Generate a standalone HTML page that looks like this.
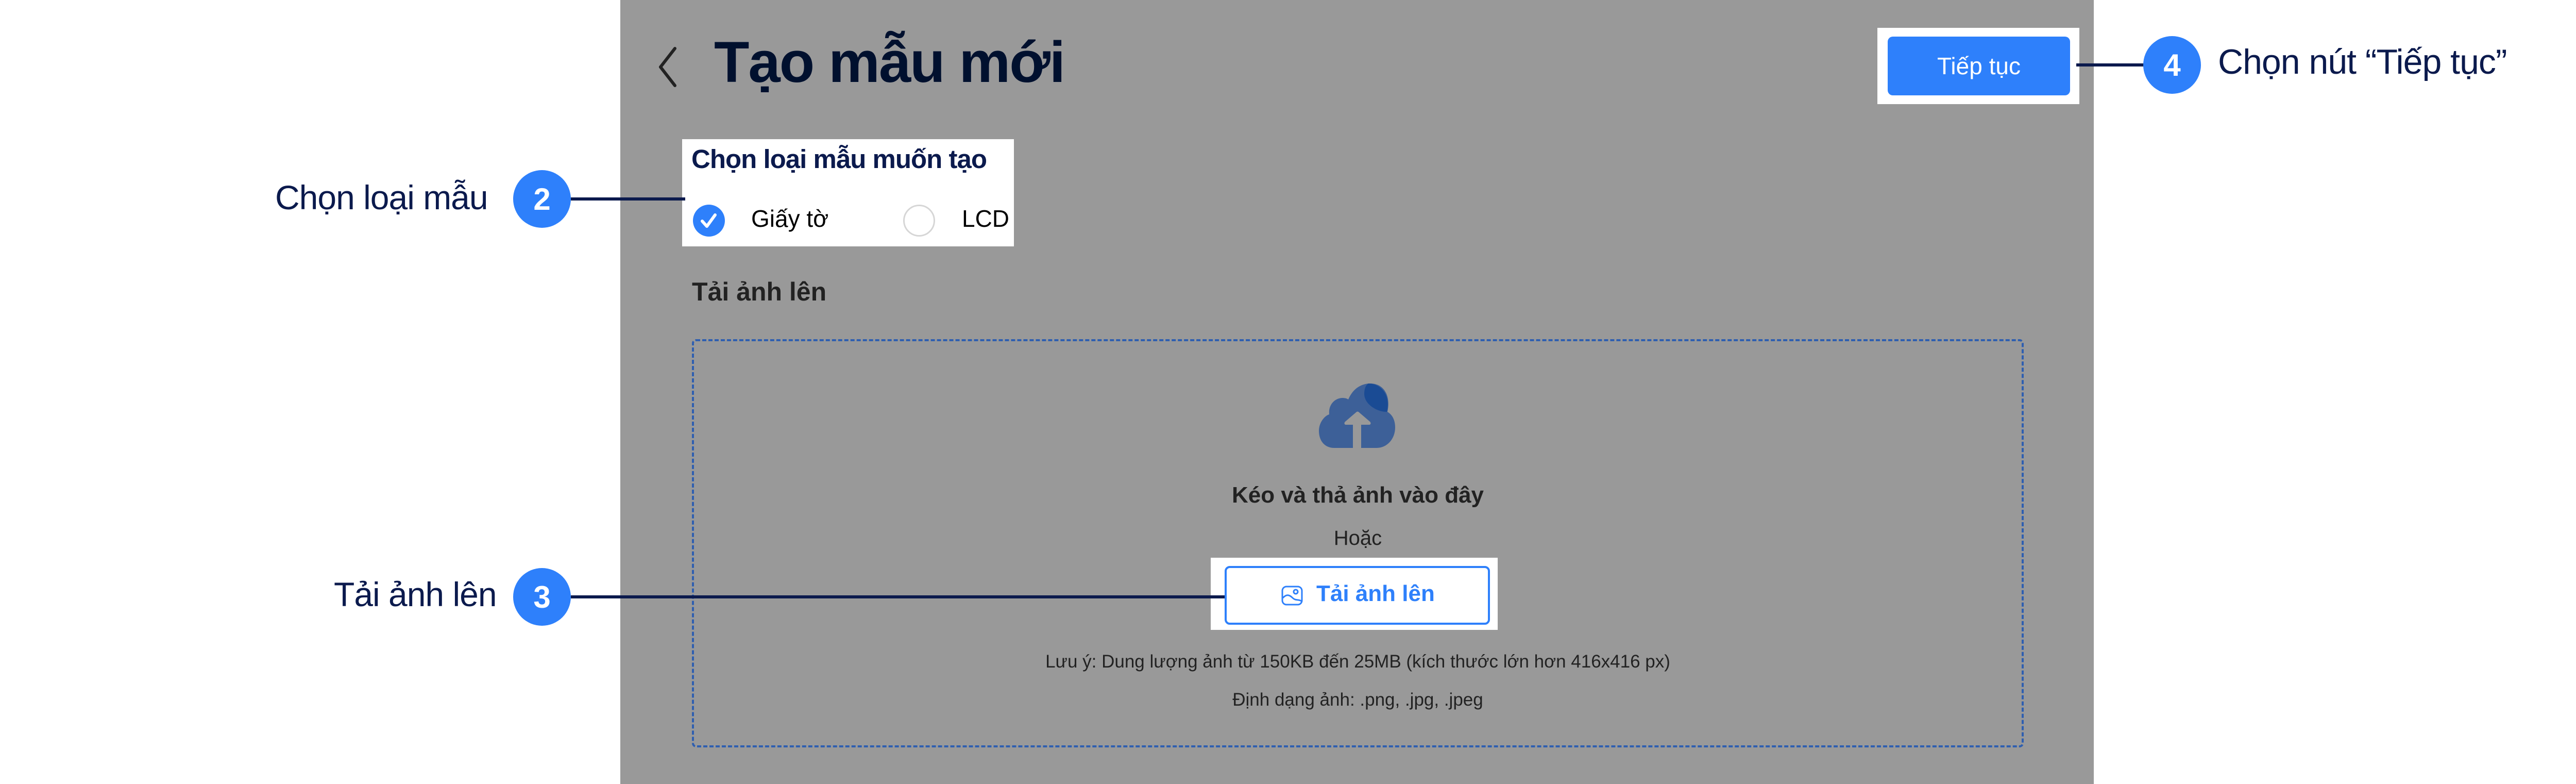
<!DOCTYPE html>
<html><head><meta charset="utf-8"><style>
*{margin:0;padding:0;box-sizing:border-box}
body{width:5264px;height:1521px;background:#fff;position:relative;overflow:hidden;font-family:"Liberation Sans","DejaVu Sans",sans-serif}
.a{position:absolute;line-height:1;white-space:nowrap}
.circ{position:absolute;width:112px;height:112px;border-radius:50%;background:#2e80fb;color:#fff;font-weight:bold;font-size:60px;display:flex;align-items:center;justify-content:center}
.ln{position:absolute;height:6px;background:#0b1a4d}
.lab{position:absolute;color:#0b1a4d;font-size:60px;line-height:1;white-space:nowrap}
</style></head><body>
<div style="position:absolute;left:1204px;top:0;width:2860px;height:1521px;background:#999"></div>

<svg style="position:absolute;left:1270px;top:90px" width="50" height="80" viewBox="0 0 50 80"><path d="M40 4 L12 40 L40 76" fill="none" stroke="#222" stroke-width="6" stroke-linecap="round" stroke-linejoin="round"/></svg>
<div class="a" style="left:1386px;top:65px;font-size:112px;font-weight:bold;color:#00102e;letter-spacing:-2px">Tạo mẫu mới</div>

<div style="position:absolute;left:1324px;top:270px;width:644px;height:208px;background:#fff"></div>
<div class="a" style="left:1342px;top:283px;font-size:51px;font-weight:bold;color:#0b1a4d;letter-spacing:-1px">Chọn loại mẫu muốn tạo</div>
<div style="position:absolute;left:1345px;top:397px;width:62px;height:62px;border-radius:50%;background:#2e80fb"></div>
<svg style="position:absolute;left:1345px;top:397px" width="62" height="62" viewBox="0 0 62 62"><path d="M18 32 L27 42 L43 20" fill="none" stroke="#fff" stroke-width="6" stroke-linecap="round" stroke-linejoin="round"/></svg>
<div class="a" style="left:1458px;top:401px;font-size:46px;color:#000">Giấy tờ</div>
<div style="position:absolute;left:1753px;top:397px;width:62px;height:62px;border-radius:50%;border:3px solid #d6d6d6;background:#fff"></div>
<div class="a" style="left:1867px;top:401px;font-size:46px;color:#000">LCD</div>

<div style="position:absolute;left:3644px;top:54px;width:392px;height:148px;background:#fff"></div>
<div style="position:absolute;left:3664px;top:71px;width:354px;height:114px;background:#2e80fb;border-radius:10px;color:#fff;font-size:46px;display:flex;align-items:center;justify-content:center">Tiếp tục</div>

<div class="a" style="left:1343px;top:541px;font-size:50px;font-weight:bold;color:#222">Tải ảnh lên</div>
<div style="position:absolute;left:1343px;top:658px;width:2585px;height:792px;border:4px dashed #2f5fb0;border-radius:8px"></div>

<svg style="position:absolute;left:2560px;top:744px" width="150" height="125" viewBox="0 0 150 125">
<path d="M30 125 C10 125 0 110 0 92 C0 75 12 62 20 60 C18 40 32 28 46 28 C52 28 56 30 57 31 C66 10 82 0 100 0 C125 0 140 22 133 55 C145 62 148 75 148 85 C148 108 132 125 112 125 Z" fill="#3d6098"/>
<path d="M96 0 C120 0 140 22 132 55 C112 55 88 40 88 20 C88 10 91 3 96 0 Z" fill="#1a4b94"/>
<path d="M66 125 V80 H52 C50 80 48 77 51 74 L72 56 C74 54 76 54 78 56 L99 74 C102 77 100 80 98 80 H82 V125 Z" fill="#999"/>
</svg>
<div class="a" style="left:1343px;width:2585px;text-align:center;top:939px;font-size:44px;font-weight:bold;color:#222">Kéo và thả ảnh vào đây</div>
<div class="a" style="left:1343px;width:2585px;text-align:center;top:1024px;font-size:40px;color:#222">Hoặc</div>

<div style="position:absolute;left:2350px;top:1082px;width:557px;height:140px;background:#fff"></div>
<div style="position:absolute;left:2377px;top:1098px;width:515px;height:114px;border:4px solid #2e80fb;border-radius:10px;background:#fff"></div>
<svg style="position:absolute;left:2487px;top:1136px" width="42" height="40" viewBox="0 0 42 40"><rect x="2" y="2" width="38" height="35" rx="8" fill="none" stroke="#2e80fb" stroke-width="3"/><path d="M3 24 C10 16 16 18 22 24 C28 30 33 26 39 30" fill="none" stroke="#2e80fb" stroke-width="3"/><circle cx="28" cy="12" r="4" fill="none" stroke="#2e80fb" stroke-width="3"/></svg>
<div class="a" style="left:2555px;top:1130px;font-size:44px;font-weight:bold;color:#2e80fb">Tải ảnh lên</div>

<div class="a" style="left:1343px;width:2585px;text-align:center;top:1266px;font-size:35px;color:#222">Lưu ý: Dung lượng ảnh từ 150KB đến 25MB (kích thước lớn hơn 416x416 px)</div>
<div class="a" style="left:1343px;width:2585px;text-align:center;top:1340px;font-size:35px;color:#222">Định dạng ảnh: .png, .jpg, .jpeg</div>

<div class="lab" style="left:534px;top:350px;font-size:66px;letter-spacing:-1px">Chọn loại mẫu</div>
<div class="circ" style="left:996px;top:330px">2</div>
<div class="ln" style="left:1108px;top:383px;width:222px"></div>

<div class="lab" style="left:648px;top:1120px;font-size:66px;letter-spacing:-1px">Tải ảnh lên</div>
<div class="circ" style="left:996px;top:1102px">3</div>
<div class="ln" style="left:1108px;top:1155px;width:1269px"></div>

<div class="ln" style="left:4030px;top:123px;width:131px"></div>
<div class="circ" style="left:4160px;top:70px">4</div>
<div class="lab" style="left:4305px;top:86px;font-size:68px;letter-spacing:-1px">Chọn nút “Tiếp tục”</div>
</body></html>
